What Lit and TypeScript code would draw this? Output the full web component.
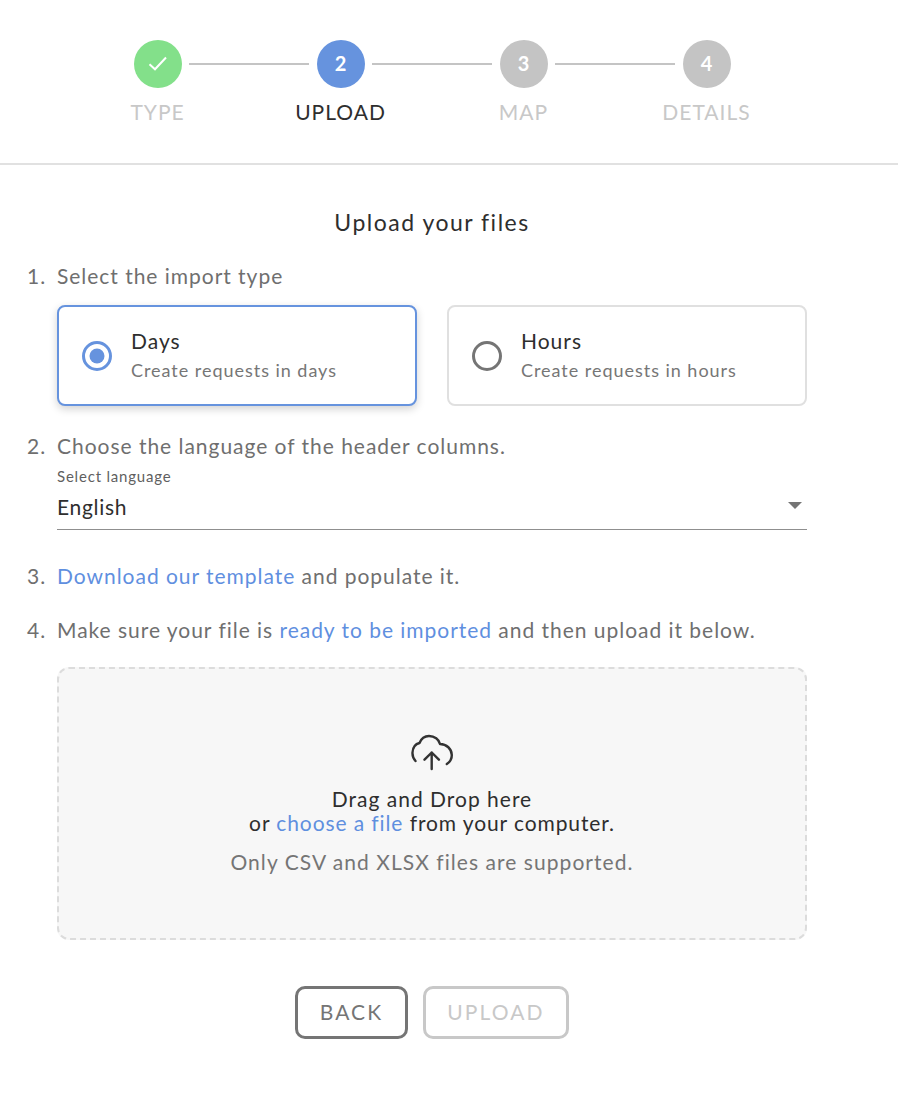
import { LitElement, html, svg, css } from "lit";
import { customElement } from "lit/decorators.js";

const steps = [
  { label: "TYPE", state: "done" },
  { label: "UPLOAD", state: "active" },
  { label: "MAP", state: "todo" },
  { label: "DETAILS", state: "todo" },
];

@customElement("app-root")
export class AppRoot extends LitElement {
  static styles = css`
    :host {
      display: block;
      width: 898px;
      height: 1104px;
      background: #fff;
      color: #2e2e2e;
      font-family: "Lato", "Noto Sans", sans-serif;
      overflow: hidden;
    }
    a {
      color: #5f8fdf;
      text-decoration: none;
    }

    .stepper {
      height: 123px;
      padding-top: 40px;
      border-bottom: 2px solid #e1e1e1;
    }
    .circles {
      display: flex;
      justify-content: center;
      align-items: center;
      width: 731px;
      margin-left: 67px;
    }
    .circle {
      width: 48px;
      height: 48px;
      box-sizing: border-box;
      padding: 0 1px 2px 0;
      border-radius: 50%;
      flex: none;
      display: flex;
      align-items: center;
      justify-content: center;
      color: #fff;
      font-size: 20px;
      font-weight: 700;
      background: #c4c4c4;
    }
    .circle.done {
      background: #83e08a;
      padding: 0;
    }
    .circle.active {
      background: #6693de;
    }
    .line {
      width: 120px;
      height: 2px;
      margin: 0 8px 0 7px;
      background: #c4c4c4;
      flex: none;
    }
    .labels {
      display: flex;
      margin-left: 66px;
      margin-top: 12px;
    }
    .labels span {
      width: 183px;
      text-align: center;
      font-size: 21px;
      line-height: 24px;
      letter-spacing: 1px;
      color: #c8c8c8;
    }
    .labels span.active {
      color: #2e2e2e;
    }

    .content {
      width: 750px;
      margin-left: 57px;
    }
    h1 {
      margin: 42px 0 0;
      font-size: 23px;
      font-weight: 400;
      line-height: 30px;
      letter-spacing: 1.5px;
      text-align: center;
    }
    .step {
      position: relative;
      font-size: 21px;
      line-height: 28px;
      letter-spacing: 0.97px;
      color: #6f6f6f;
    }
    .num {
      position: absolute;
      left: -30px;
      top: 0;
    }
    .s1 {
      margin-top: 25px;
    }
    .cards {
      display: flex;
      gap: 30px;
      margin-top: 15px;
    }
    .card {
      width: 360px;
      height: 101px;
      box-sizing: border-box;
      border: 2px solid #e0e0e0;
      border-radius: 8px;
      display: flex;
      align-items: center;
      gap: 19px;
      padding-left: 23px;
      background: #fff;
    }
    .card.selected {
      border-color: #6693de;
      box-shadow: 0 3px 8px rgba(0, 0, 0, 0.18);
    }
    .radio {
      width: 30px;
      height: 30px;
      flex: none;
    }
    .card-title {
      font-size: 21px;
      line-height: 28px;
      letter-spacing: 1px;
      color: #2e2e2e;
      margin-top: -2px;
    }
    .card-sub {
      font-size: 18px;
      line-height: 24px;
      letter-spacing: 0.97px;
      color: #767676;
      margin-top: 3px;
    }

    .s2 {
      margin-top: 26px;
    }
    .select {
      margin-top: 6px;
      height: 64px;
      box-sizing: border-box;
      border-bottom: 1px solid #8f8f8f;
      position: relative;
    }
    .select-label {
      display: block;
      font-size: 15px;
      line-height: 20px;
      letter-spacing: 0.8px;
      color: #5f5f5f;
    }
    .select-value {
      display: block;
      margin-top: 7px;
      font-size: 21px;
      line-height: 28px;
      letter-spacing: 0.7px;
      color: #2e2e2e;
    }
    .caret {
      position: absolute;
      right: 5px;
      top: 36px;
      border-left: 7.5px solid transparent;
      border-right: 7.5px solid transparent;
      border-top: 7px solid #757575;
    }
    .s3 {
      margin-top: 32px;
    }
    .s4 {
      margin-top: 26px;
    }
    .drop {
      margin-top: 23px;
      height: 273px;
      box-sizing: border-box;
      background: #f7f7f7;
      border: 2px dashed #dcdcdc;
      border-radius: 12px;
      display: flex;
      flex-direction: column;
      align-items: center;
      padding-top: 65px;
      font-size: 21px;
      line-height: 24px;
      letter-spacing: 1px;
      color: #2e2e2e;
    }
    .drop svg {
      width: 44px;
      height: 44px;
      margin-bottom: 9px;
    }
    .drop .second {
      letter-spacing: 0.9px;
    }
    .drop .hint {
      margin-top: 15px;
      color: #757575;
      letter-spacing: 1.05px;
    }
    .actions {
      display: flex;
      justify-content: center;
      gap: 15px;
      margin-top: 46px;
    }
    .btn {
      height: 53px;
      box-sizing: border-box;
      background: #fff;
      border: 3px solid #757575;
      border-radius: 10px;
      font: inherit;
      font-size: 21px;
      letter-spacing: 2.1px;
      color: #757575;
      padding: 0 0 3px;
    }
    .btn.back {
      width: 113px;
    }
    .btn.upload {
      width: 146px;
      border-color: #c8c8c8;
      color: #c8c8c8;
    }
  `;

  renderCard(title: string, sub: string, selected: boolean) {
    return html`
      <div class="card ${selected ? "selected" : ""}">
        <svg class="radio" viewBox="0 0 30 30">
          <circle cx="15" cy="15" r="13.5" fill="none" stroke=${selected ? "#6693de" : "#757575"} stroke-width="3"></circle>
          ${selected ? svg`<circle cx="15" cy="15" r="7.500" fill="#6693de"></circle>` : ""}
        </svg>
        <div>
          <div class="card-title">${title}</div>
          <div class="card-sub">${sub}</div>
        </div>
      </div>
    `;
  }

  render() {
    return html`
      <div class="stepper">
        <div class="circles">
          ${steps.map(
            (s, i) => html`
              <div class="circle ${s.state}">
                ${s.state === "done"
                  ? html`<svg width="20" height="20" viewBox="0 0 20 20">
                      <path d="M1.500 10.300L7 15.300 18 3.500" fill="none" stroke="#fff" stroke-width="2"></path>
                    </svg>`
                  : i + 1}
              </div>
              ${i < steps.length - 1 ? html`<div class="line"></div>` : ""}
            `
          )}
        </div>
        <div class="labels">
          ${steps.map((s) => html`<span class=${s.state === "active" ? "active" : ""}>${s.label}</span>`)}
        </div>
      </div>

      <div class="content">
        <h1>Upload your files</h1>

        <div class="step s1"><span class="num">1.</span>Select the import type</div>
        <div class="cards">
          ${this.renderCard("Days", "Create requests in days", true)}
          ${this.renderCard("Hours", "Create requests in hours", false)}
        </div>

        <div class="step s2"><span class="num">2.</span>Choose the language of the header columns.</div>
        <div class="select">
          <span class="select-label">Select language</span>
          <span class="select-value">English</span>
          <span class="caret"></span>
        </div>

        <div class="step s3"><span class="num">3.</span><a href="#">Download our template</a> and populate it.</div>
        <div class="step s4">
          <span class="num">4.</span>Make sure your file is <a href="#">ready to be imported</a> and then upload it below.
        </div>

        <div class="drop">
          <svg viewBox="0 0 44 44" fill="none" stroke="#333" stroke-width="2.400" stroke-linecap="round" stroke-linejoin="round">
            <path d="M5.500 27C3.300 24.500 2.300 21.500 2.500 18.500 2.800 13.500 5.500 10 9.500 9 11.300 4.500 15 2 19 2 24.500 2 29 5.500 30 10 36.500 10 41.800 15 41.800 21 41.800 25 40 28 36.800 30"></path>
            <path d="M21.700 35V18.500M14.500 25.700l7.200-7.200 7.200 7.200"></path>
          </svg>
          <div>Drag and Drop here</div>
          <div class="second">or <a href="#">choose a file</a> from your computer.</div>
          <div class="hint">Only CSV and XLSX files are supported.</div>
        </div>

        <div class="actions">
          <button class="btn back">BACK</button>
          <button class="btn upload">UPLOAD</button>
        </div>
      </div>
    `;
  }
}
